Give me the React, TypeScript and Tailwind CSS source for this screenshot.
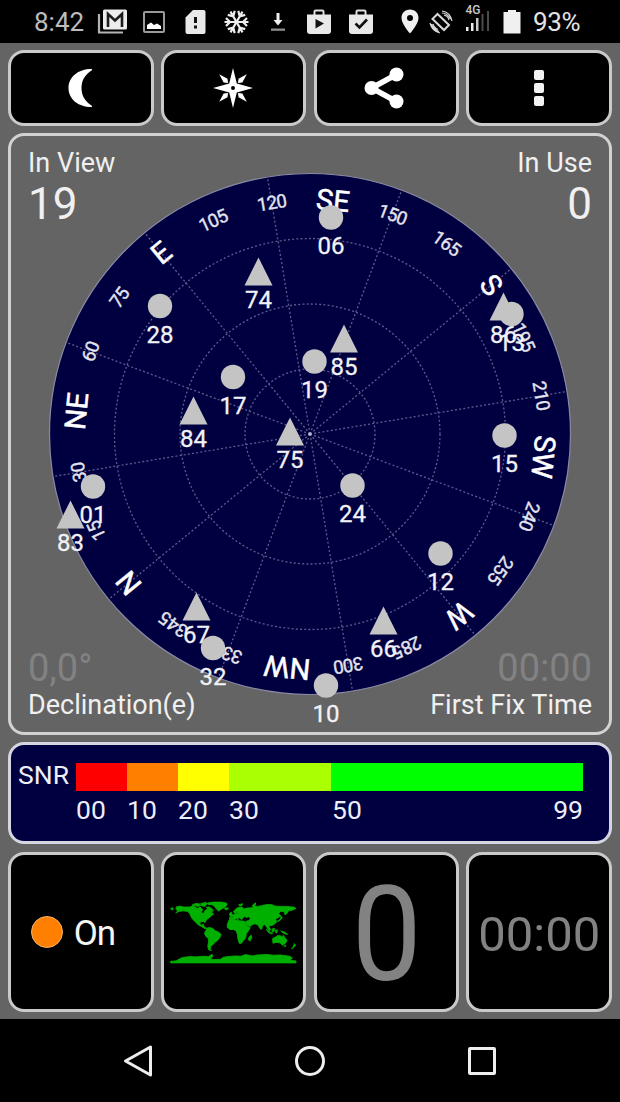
import React from "react";

const CX = 310;
const CY = 434;
const HEADING = 230.6;

const ticks: [number, string][] = [
  [0, "N"], [15, "15"], [30, "30"], [45, "NE"], [60, "60"], [75, "75"],
  [90, "E"], [105, "105"], [120, "120"], [135, "SE"], [150, "150"], [165, "165"],
  [180, "S"], [195, "195"], [210, "210"], [225, "SW"], [240, "240"], [255, "255"],
  [270, "W"], [285, "285"], [300, "300"], [315, "NW"], [330, "330"], [345, "345"],
];

const gps: [string, number, number][] = [
  ["28", 160, 306], ["17", 233, 377], ["06", 331, 217.5], ["19", 314.5, 361.5],
  ["15", 504.5, 435.5], ["24", 352.5, 485.5], ["12", 440.5, 553.5],
  ["01", 93, 486.5], ["32", 213, 648], ["10", 326, 685.5],
];

const glonass: [string, number, number][] = [
  ["74", 258.5, 285.5], ["85", 344, 352.5], ["84", 193.5, 424.5], ["75", 290, 445.5],
  ["86", 503.5, 320.5], ["83", 70.5, 528.5], ["67", 196.5, 620.5], ["66", 383.5, 634.5],
];

function Dot({ id, x, y }: { id: string; x: number; y: number }) {
  return (
    <g>
      <circle cx={x} cy={y} r="12.2" fill="#c4c4c4" />
      <text x={x} y={y + 36.7} textAnchor="middle" fontSize="24" fill="#f2f2f6" stroke="#f2f2f6" strokeWidth="0.3">{id}</text>
    </g>
  );
}

function Triangle({ id, x, y }: { id: string; x: number; y: number }) {
  return (
    <g>
      <path d={`M${x} ${y - 28}L${x + 14} ${y}H${x - 14}Z`} fill="#c4c4c4" />
      <text x={x} y={y + 22.8} textAnchor="middle" fontSize="24" fill="#f2f2f6" stroke="#f2f2f6" strokeWidth="0.3">{id}</text>
    </g>
  );
}

function SkyView() {
  return (
    <svg className="absolute -inset-[3px] h-[602px] w-[604px] font-[Roboto,sans-serif]" viewBox="8 133 604 602">
      <circle cx={CX} cy={CY} r="260.5" fill="#000041" stroke="#8a8aa4" strokeWidth="1.2" />
      <g stroke="#5c5c8a" strokeWidth="1.3" strokeDasharray="2 2.2" fill="none">
        <circle cx={CX} cy={CY} r="65" />
        <circle cx={CX} cy={CY} r="130" />
        <circle cx={CX} cy={CY} r="195.5" />
        {Array.from({ length: 12 }, (_, i) => (
          <path key={i} d={`M${CX} ${CY}V${CY - 260}`} transform={`rotate(${HEADING + i * 30} ${CX} ${CY})`} />
        ))}
      </g>
      <circle cx={CX} cy={CY} r="1.8" fill="#b8b8d0" />
      {ticks.map(([az, label]) => {
        const letter = az % 45 === 0;
        return (
          <text
            key={az}
            x={CX}
            y={letter ? CY - 224.5 : CY - 228}
            textAnchor="middle"
            fontSize={letter ? 29 : 18.5}
            fill={letter ? "#ffffff" : "#e4e4ee"}
            stroke={letter ? "#ffffff" : "#e4e4ee"}
            strokeWidth={letter ? 0.5 : 0.4}
            letterSpacing={letter ? 0 : -0.6}
            transform={`rotate(${HEADING + az} ${CX} ${CY})`}
          >
            {label}
          </text>
        );
      })}
      {gps.map(([id, x, y]) => <Dot key={id} id={id} x={x} y={y} />)}
      {glonass.map(([id, x, y]) => <Triangle key={id} id={id} x={x} y={y} />)}
      <Dot id="13" x={511.5} y={314} />
    </svg>
  );
}

function StatusBar() {
  return (
    <header className="flex h-[43px] items-center bg-black text-[#e6e6e6]">
      <span className="ml-[34px] w-[63px] text-[26px] leading-none tracking-[0px] text-[#bdbdbd]">8:42</span>
      <svg className="h-[26px] w-[31px]" viewBox="0 0 31 26" fill="none">
        <path d="M2 5V23.5H26" stroke="#b4b4b4" strokeWidth="2.2" />
        <rect x="6" y="0.5" width="24" height="20" rx="1.5" fill="#ececec" />
        <path d="M11 18V5L18 11.500L25 5V18" stroke="#1c1c1c" strokeWidth="2.600" />
      </svg>
      <svg className="ml-[15px] h-[24px] w-[22px]" viewBox="0 0 22 24">
        <rect x="1" y="2" width="20" height="20" rx="1" fill="none" stroke="#9a9a9a" strokeWidth="2" />
        <path d="M4 19V15L8 12.500L11 15L14 13.500L18 16V19Z" fill="#fff" />
      </svg>
      <svg className="ml-[20px] h-[26px] w-[21px]" viewBox="0 0 21 26">
        <path d="M8 1H18.500Q20.500 1 20.500 3V23Q20.500 25 18.500 25H2.500Q0.500 25 0.500 23V8.500Z" fill="#e9e9e9" />
        <path d="M9 8H12V14H9ZM9 16.500H12V19.500H9Z" fill="#111" />
      </svg>
      <svg className="ml-[17px] h-[26px] w-[27px]" viewBox="-13 -13 26 26" fill="none" stroke="#ededed" strokeWidth="2.200">
        {[0, 60, 120, 180, 240, 300].map((a) => (
          <path key={a} d="M0 0V-12M-4 -10.500L0 -6.500L4 -10.500" transform={`rotate(${a + 30})`} />
        ))}
      </svg>
      <svg className="ml-[20px] h-[20px] w-[16px]" viewBox="0 0 16 20">
        <path d="M6.500 1H9.500V8H12.500L8 13.500L3.500 8H6.500Z" fill="#eee" />
        <path d="M1 16.500H15V18.800H1Z" fill="#8e8e8e" />
      </svg>
      <svg className="ml-[20px] h-[26px] w-[26px]" viewBox="0 0 26 26">
        <path d="M8.500 6V2.500Q8.500 1.500 9.500 1.500H16.500Q17.500 1.500 17.500 2.500V6" fill="none" stroke="#ddd" strokeWidth="2" />
        <path d="M1 5.500H25V22Q25 25 22 25H4Q1 25 1 22Z" fill="#e9e9e9" />
        <path d="M9.500 10L18 14.500L9.500 19.500Z" fill="#111" />
      </svg>
      <svg className="ml-[16px] h-[26px] w-[26px]" viewBox="0 0 26 26">
        <path d="M8.500 6V2.500Q8.500 1.500 9.500 1.500H16.500Q17.500 1.500 17.500 2.500V6" fill="none" stroke="#ddd" strokeWidth="2" />
        <path d="M1 5.500H25V22Q25 25 22 25H4Q1 25 1 22Z" fill="#e9e9e9" />
        <path d="M7.500 14.500L11.500 18.500L19 10.500" fill="none" stroke="#111" strokeWidth="2.600" />
      </svg>
      <svg className="ml-[27px] h-[25px] w-[18px]" viewBox="0 0 18 25">
        <path fillRule="evenodd" d="M9 0.500C4 0.500 0.500 4 0.500 9C0.500 15 9 24.500 9 24.500S17.500 15 17.500 9C17.500 4 14 0.500 9 0.500ZM9 6A3 3 0 1 1 9 12A3 3 0 0 1 9 6Z" fill="#f0f0f0" />
      </svg>
      <svg className="ml-[10px] h-[24px] w-[24px]" viewBox="0 0 24 24" fill="none" stroke="#d8d8d8">
        <path d="M8.500 4L20 15L15 20L3.500 9Z" strokeWidth="2" />
        <path d="M13 1Q21 2 23 11M15 5Q19 6 20 10M13 3Q18 3 21.500 9" strokeWidth="1.200" />
        <path d="M1 13Q3 21 11 23M4 14Q5 18 9 19.500M2.500 14Q4 20 10 21.500" strokeWidth="1.200" />
      </svg>
      <svg className="ml-[12px] h-[43px] w-[26px]" viewBox="0 0 26 43">
        <text x="0.500" y="13.500" fontSize="13" fontWeight="500" textLength="15" lengthAdjust="spacingAndGlyphs" fill="#c8c8c8">4G</text>
        <path d="M1 27H3.500V31H1ZM6 23H8.500V31H6Z" fill="#eee" />
        <path d="M11 18H13.500V31H11Z" fill="#c8c8c8" />
        <path d="M16.500 14H18.500V31H16.500ZM22 11H24V31H22Z" fill="#4a4a4a" />
      </svg>
      <svg className="ml-[12px] h-[25px] w-[18px]" viewBox="0 0 18 25">
        <path d="M5 1H13V3H17.500V24.500H0.500V3H5Z" fill="#f0f0f0" />
      </svg>
      <span className="ml-[12px] text-[26px] leading-none tracking-[-0.3px] text-[#e4e4e4]">93%</span>
    </header>
  );
}

function Tile({ children }: { children: React.ReactNode }) {
  return (
    <div className="flex items-center justify-center rounded-[16px] border-[3px] border-[#cacaca] bg-black">
      {children}
    </div>
  );
}

function Toolbar() {
  return (
    <nav className="mt-[7px] grid h-[76px] grid-cols-4 gap-[7.300px] px-2">
      <Tile>
        <svg className="h-10 w-[26px]" viewBox="0 0 26 40">
          <path d="M23.500 1C10 1 0.500 9 0.500 20S10 39 23.500 39Q25 38.500 23.500 37.500C16.500 33 13.500 27 13.500 20S16.500 7 23.500 2.500Q25 1.500 23.500 1Z" fill="#fff" />
        </svg>
      </Tile>
      <Tile>
        <svg className="mr-[2px] h-10 w-10" viewBox="-20 -20 40 40" fill="#fff">
          <path fillRule="evenodd" d="M0 -20L3.800 -4.500L20 0L3.800 4.500L0 20L-3.800 4.500L-20 0L-3.800 -4.500ZM0 -2A2 2 0 1 0 0 2A2 2 0 1 0 0 -2Z" />
          {[45, 135, 225, 315].map((a) => (
            <path key={a} d="M0 -19.500L2.700 -10.500L0 -7L-2.700 -10.500Z" transform={`rotate(${a})`} />
          ))}
        </svg>
      </Tile>
      <Tile>
        <svg className="mr-1 h-[42px] w-10" viewBox="0 0 40 42">
          <path d="M32.500 7.500L7.500 21L32.500 34.500" fill="none" stroke="#fff" strokeWidth="5.500" />
          <circle cx="32.500" cy="7.500" r="7" fill="#fff" />
          <circle cx="7.500" cy="21" r="7" fill="#fff" />
          <circle cx="32.500" cy="34.500" r="7" fill="#fff" />
        </svg>
      </Tile>
      <Tile>
        <div className="flex flex-col gap-[3.500px]">
          <i className="size-[9.500px] rounded-[2px] bg-[#f2f2f2]" />
          <i className="size-[9.500px] rounded-[2px] bg-[#f2f2f2]" />
          <i className="size-[9.500px] rounded-[2px] bg-[#f2f2f2]" />
        </div>
      </Tile>
    </nav>
  );
}

function SnrPanel() {
  return (
    <section className="mx-2 mt-[7px] flex h-[102px] rounded-[16px] border-[3px] border-[#d6d6e2] bg-[#000041] pl-[7px] pt-[18px] text-[26.500px] text-[#eeeef8]">
      <div className="w-[58px] leading-[24px]">SNR</div>
      <div className="w-[507px]">
        <div className="flex h-7">
          <div className="w-[51px] bg-[#ff0000]" />
          <div className="w-[51px] bg-[#ff8000]" />
          <div className="w-[51px] bg-[#ffff00]" />
          <div className="w-[102px] bg-[#aaff00]" />
          <div className="flex-1 bg-[#00ff00]" />
        </div>
        <div className="mt-[5px] flex leading-[27px]">
          <span className="w-[51px]">00</span>
          <span className="w-[51px]">10</span>
          <span className="w-[51px]">20</span>
          <span className="w-[102px]">30</span>
          <span className="flex-1 pl-[1px]">50</span>
          <span>99</span>
        </div>
      </div>
    </section>
  );
}

function WorldMap() {
  return (
    <svg className="h-[63px] w-[127px]" viewBox="30 155 380 188" fill="#00b000" stroke="#00b000" strokeWidth="2.500" strokeLinejoin="round">
      <path d="M32 177L38 175L40 180L34 181ZM48 173L58 170L72 173L90 173L96 169L104 172L112 177L120 173L128 180L124 188L130 194L134 184L142 179L150 182L156 190L161 194L154 198L150 203L143 207L138 213L134 220L132 216L122 217L119 223L124 227L130 224L132 231L138 236L146 235L142 239L132 236L124 231L114 226L107 218L99 211L93 202L89 192L82 186L70 184L58 186L47 190L54 184L48 180Z" />
      <path d="M96 167L106 162L118 163L122 168L114 171ZM122 162L138 159L142 163L134 171L124 169ZM138 174L146 172L156 178L159 186L151 184L145 179Z" />
      <path d="M142 161L158 158L184 158L199 161L201 167L193 174L184 179L176 185L170 180L164 172L156 166L144 165ZM194 176L202 175L205 178L199 181L194 180Z" />
      <path d="M141 237L149 234L158 237L166 244L177 249L183 255L179 264L173 272L164 279L158 286L152 291L150 299L154 303L146 301L143 291L145 278L145 268L137 260L133 251Z" />
      <path d="M207 211L219 209L228 212L238 214L252 215L258 224L264 232L270 235L264 245L258 253L257 263L250 273L243 282L237 281L233 268L232 257L229 246L221 240L209 240L201 233L202 223Z" />
      <path d="M273 257L275 264L269 275L264 270L267 262ZM208 192L213 188L217 196L221 199L210 202ZM220 186L228 177L238 173L248 174L250 179L260 176L274 175L282 169L292 171L303 169L320 165L335 166L344 170L362 171L379 171L400 173L407 177L397 182L385 184L380 192L374 196L372 187L361 186L355 192L361 199L353 205L345 210L350 216L344 223L335 228L326 228L327 234L332 240L327 244L320 234L313 225L307 228L304 240L299 237L293 226L284 223L276 226L268 232L260 225L256 216L265 213L271 208L265 202L259 204L252 201L247 207L244 211L238 205L232 207L235 211L228 207L220 209L208 209L209 203L218 203L220 196L231 192L233 186L228 190L224 193Z" />
      <path d="M236 165L248 163L244 170L237 169ZM281 164L286 160L286 166L279 172L276 169ZM360 198L366 205L358 214L351 216L359 210L362 203ZM318 239L330 248L338 251L331 253L322 246ZM336 238L343 237L341 247L335 246ZM346 242L351 241L350 250L346 249ZM361 244L374 248L382 255L370 252Z" />
      <path d="M337 267L345 263L353 258L361 259L365 264L369 257L374 265L380 272L376 281L367 287L359 280L348 279L338 281ZM371 289L377 288L374 292ZM402 282L406 288L400 294L394 298L399 291Z" />
      <path d="M32 335L48 334L62 326L72 323L90 321L108 322L128 320L145 321L152 316L157 315L158 321L150 327L160 330L181 329L190 323L204 321L226 319L242 320L256 315L276 319L292 316L320 315L340 317L360 316L389 320L396 326L389 332L407 334L407 340L32 340Z" />
    </svg>
  );
}

export default function App() {
  return (
    <main className="flex h-[1102px] w-[620px] flex-col overflow-hidden bg-[#646464] font-[Roboto,sans-serif]">
      <StatusBar />
      <Toolbar />
      <section className="relative mx-2 mt-[7px] flex h-[602px] flex-col justify-between rounded-[16px] border-[3px] border-[#d2d2d2] text-[27px] leading-[30px] text-[#f0f0f0]">
        <SkyView />
        <div className="relative flex justify-between pl-[17px] pr-[17px] pt-[12px]">
          <div>
            <div>In View</div>
            <div className="pt-px text-[44px] leading-[50px]">19</div>
          </div>
          <div className="text-right">
            <div>In Use</div>
            <div className="pt-px text-[44px] leading-[50px]">0</div>
          </div>
        </div>
        <div className="relative flex justify-between pb-[12px] pl-[17px] pr-[17px]">
          <div>
            <div className="text-[38px] leading-[43px] text-[#828282]">0,0°</div>
            <div>Declination(e)</div>
          </div>
          <div className="text-right">
            <div className="text-[38px] leading-[43px] text-[#828282]">00:00</div>
            <div>First Fix Time</div>
          </div>
        </div>
      </section>
      <SnrPanel />
      <div className="mt-[8px] grid h-[160px] grid-cols-4 gap-[7.300px] px-2">
        <Tile>
          <span className="mr-[11px] size-8 rounded-full border border-[#f0b070] bg-[#ff8000]" />
          <span className="mr-[16px] pt-[4px] text-[35px] tracking-[-1.2px] text-[#f5f5f5]">On</span>
        </Tile>
        <Tile><WorldMap /></Tile>
        <Tile><span className="origin-center scale-x-[0.95] pt-[6px] text-[131px] leading-none text-[#828282]">0</span></Tile>
        <Tile><span className="pt-[4px] text-[49px] leading-none text-[#828282]">00:00</span></Tile>
      </div>
      <footer className="mt-auto flex h-[83px] items-center bg-black">
        <svg className="ml-[122px] h-9 w-8" viewBox="0 0 32 36">
          <path d="M28.500 4V32L3.500 18Z" fill="none" stroke="#eee" strokeWidth="3" strokeLinejoin="round" />
        </svg>
        <i className="ml-[141px] size-[30px] rounded-full border-[3px] border-[#eee]" />
        <i className="ml-[143px] size-7 rounded-[2px] border-[3px] border-[#eee]" />
      </footer>
    </main>
  );
}
